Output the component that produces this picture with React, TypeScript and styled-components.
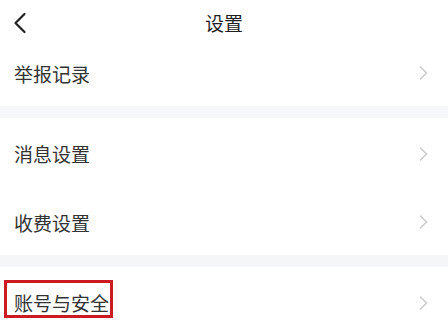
import React from "react";
import styled, { createGlobalStyle } from "styled-components";

const GlobalStyle = createGlobalStyle`
    body {
        margin: 0;
        background: #ffffff;
        font-family: "Noto Sans CJK SC", "Noto Sans", sans-serif;
    }
`

const StyledPage = styled.div`
    width: 448px;
    height: 332px;
    overflow: hidden;
    display: flex;
    flex-direction: column;
    background: #ffffff;
`

const StyledHeader = styled.div`
    height: 37.5px;
    flex-shrink: 0;
    display: grid;
    grid-template-columns: 60px 1fr 60px;
    align-items: center;
    padding-top: 8px;
    box-sizing: border-box;
`

const StyledBack = styled.div`
    display: flex;
    align-items: center;
    padding-left: 13px;
`

const StyledTitle = styled.div`
    text-align: center;
    font-size: 19px;
    color: #1f1f1f;
    line-height: 1;
`

const StyledRow = styled.div`
    height: 68.5px;
    flex-shrink: 0;
    display: flex;
    align-items: center;
    justify-content: space-between;
    padding: 3px 20px 0 14px;
    box-sizing: border-box;
`

const StyledLabel = styled.span<{ $marked?: boolean }>`
    position: relative;
    display: inline-block;
    font-size: 19px;
    line-height: 19px;
    color: #333333;

    ${p => p.$marked && `
        &::after {
            content: "";
            position: absolute;
            left: -10px;
            right: -4px;
            top: -13.5px;
            bottom: -6px;
            border: 3px solid #cc1a22;
        }
    `}
`

const StyledGap = styled.div`
    height: 12px;
    flex-shrink: 0;
    background: #f5f6f8;
`

const Chevron = () => (
    <svg width="10" height="16" viewBox="0 0 10 16">
        <path d="M2.5 2 L8.5 8 L2.5 14" fill="none" stroke="#cccccc" strokeWidth="1.6" strokeLinecap="round" strokeLinejoin="round" />
    </svg>
)

const BackArrow = () => (
    <svg width="14" height="22" viewBox="0 0 14 22">
        <path d="M11.5 2 L2.5 11 L11.5 20" fill="none" stroke="#222222" strokeWidth="2.2" strokeLinecap="round" strokeLinejoin="round" />
    </svg>
)

type Item = { label: string; marked?: boolean } | "gap";

const items: Item[] = [
    { label: "举报记录" },
    "gap",
    { label: "消息设置" },
    { label: "收费设置" },
    "gap",
    { label: "账号与安全", marked: true },
];

const App = () => {
    return (
        <StyledPage>
            <GlobalStyle />
            <StyledHeader>
                <StyledBack><BackArrow /></StyledBack>
                <StyledTitle>设置</StyledTitle>
                <div />
            </StyledHeader>
            {items.map((item, i) =>
                item === "gap"
                    ? <StyledGap key={i} />
                    : (
                        <StyledRow key={i}>
                            <StyledLabel $marked={item.marked}>{item.label}</StyledLabel>
                            <Chevron />
                        </StyledRow>
                    )
            )}
        </StyledPage>
    )
}
export default App;
